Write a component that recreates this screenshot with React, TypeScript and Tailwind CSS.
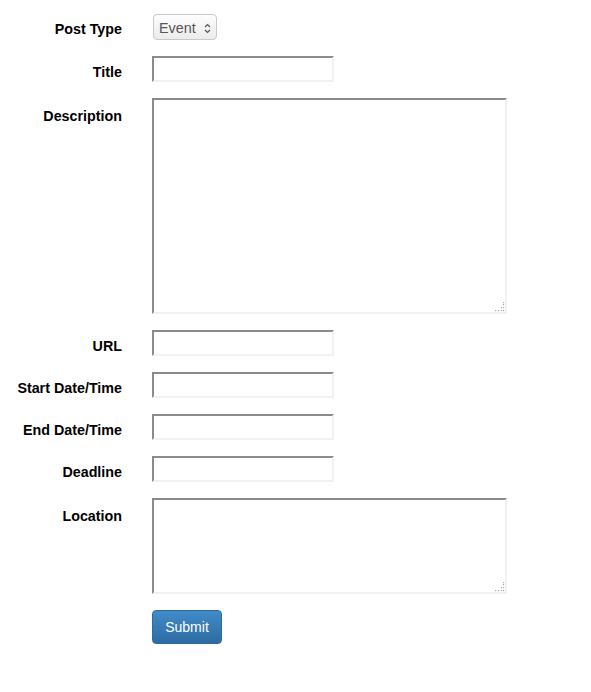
import React from "react";

const inputCls =
  "block bg-white border-2 border-t-[#8b8b8b] border-l-[#8b8b8b] border-r-[#f1f1f1] border-b-[#f1f1f1] outline-none";

function Label({ children, pt = "pt-[6px]" }: { children: React.ReactNode; pt?: string }) {
  return (
    <div className={`text-right font-bold text-[14.3px] leading-5 text-black ${pt}`}>
      {children}
    </div>
  );
}

function Grip() {
  const dots: [number, number][] = [
    [9, 1],
    [9, 3],
    [7, 6],
    [9, 6],
    [1, 9],
    [4, 9],
    [7, 9],
    [9, 9],
  ];
  return (
    <svg
      width="11"
      height="11"
      viewBox="0 0 11 11"
      className="absolute right-[2px] bottom-[2px] pointer-events-none"
    >
      {dots.map(([x, y], i) => (
        <rect key={i} x={x} y={y} width="1.2" height="1.2" fill="#a8a8a8" />
      ))}
    </svg>
  );
}

function Area({ h }: { h: string }) {
  return (
    <div className="relative w-[355px]">
      <textarea className={`${inputCls} w-[355px] ${h} resize-none`} />
      <Grip />
    </div>
  );
}

export default function App() {
  return (
    <div
      className="bg-white min-h-[692px] w-[591px] pt-[14px]"
      style={{ fontFamily: '"Liberation Sans", Arial, sans-serif' }}
    >
      <div className="grid grid-cols-[122px_1fr] gap-x-[30px] gap-y-4">
        <Label pt="pt-[5px]">Post Type</Label>
        <div>
          <div className="ml-px flex items-center h-[26px] w-[64px] rounded-[4px] border border-[#c8c8c8] bg-gradient-to-b from-[#fdfdfd] to-[#ececec] pl-[5px] pr-[5px] text-[14.4px] text-[#555]">
            <span className="flex-1 leading-5 pt-[2px]">Event</span>
            <svg width="7" height="11" viewBox="0 0 7 11" className="shrink-0 mt-[2px]">
              <path d="M1 4 L3.5 1.5 L6 4" fill="none" stroke="#555" strokeWidth="1.2" />
              <path d="M1 7 L3.5 9.5 L6 7" fill="none" stroke="#555" strokeWidth="1.2" />
            </svg>
          </div>
        </div>

        <Label>Title</Label>
        <div>
          <input className={`${inputCls} w-[182px] h-[26px]`} />
        </div>

        <Label pt="pt-[8px]">Description</Label>
        <div>
          <Area h="h-[216px]" />
        </div>

        <Label>URL</Label>
        <div>
          <input className={`${inputCls} w-[182px] h-[26px]`} />
        </div>

        <Label>Start Date/Time</Label>
        <div>
          <input className={`${inputCls} w-[182px] h-[26px]`} />
        </div>

        <Label>End Date/Time</Label>
        <div>
          <input className={`${inputCls} w-[182px] h-[26px]`} />
        </div>

        <Label>Deadline</Label>
        <div>
          <input className={`${inputCls} w-[182px] h-[26px]`} />
        </div>

        <Label pt="pt-[8px]">Location</Label>
        <div>
          <Area h="h-[96px]" />
        </div>

        <div />
        <div>
          <button className="h-[34px] w-[70px] rounded-[4px] border border-[#2d6ca2] bg-gradient-to-b from-[#428bca] to-[#2d6ca2] text-white text-[14px] leading-5">
            Submit
          </button>
        </div>
      </div>
    </div>
  );
}
